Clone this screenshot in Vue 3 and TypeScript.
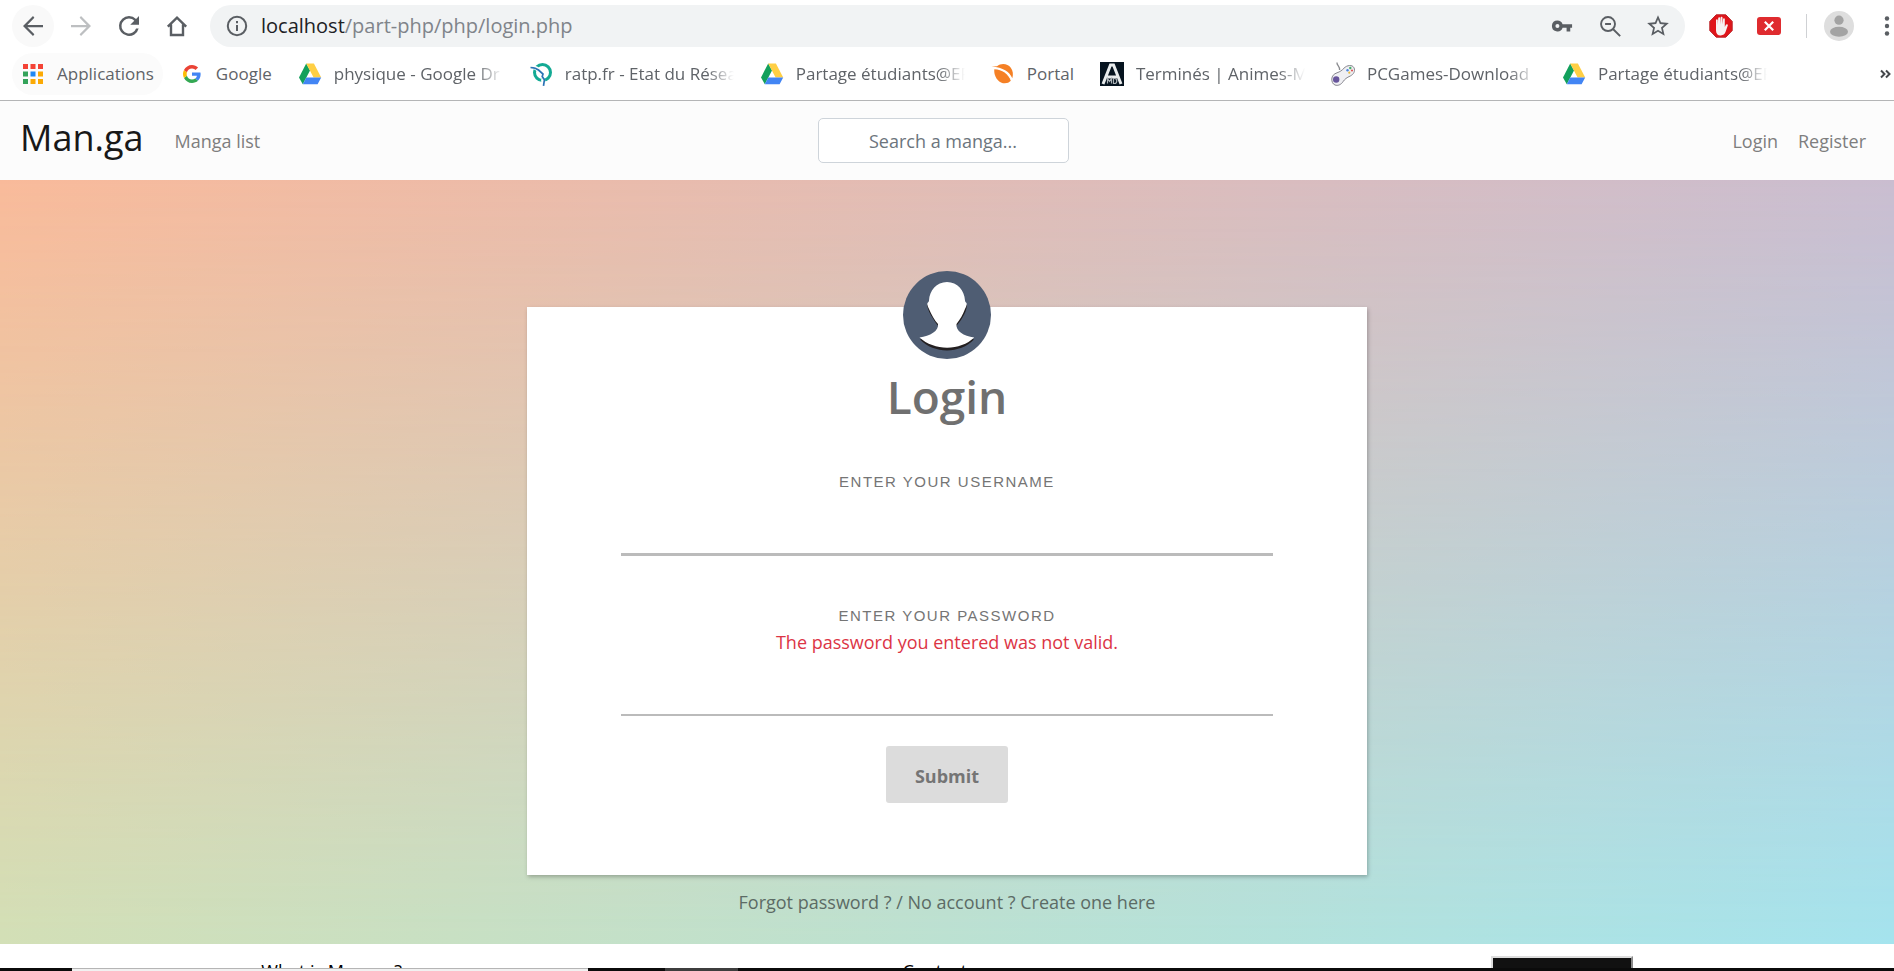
<script setup lang="ts">
import { ref } from 'vue'

type BookmarkIcon = 'google' | 'drive' | 'ratp' | 'portal' | 'anime' | 'gamepad'

interface Bookmark {
  icon: BookmarkIcon
  label: string
  long: boolean
}

const bookmarks: Bookmark[] = [
  { icon: 'google', label: 'Google', long: false },
  { icon: 'drive', label: 'physique - Google Dr', long: true },
  { icon: 'ratp', label: 'ratp.fr - Etat du Résea', long: true },
  { icon: 'drive', label: 'Partage étudiants@EF', long: true },
  { icon: 'portal', label: 'Portal', long: false },
  { icon: 'anime', label: 'Terminés | Animes-Ma', long: true },
  { icon: 'gamepad', label: 'PCGames-Download |', long: true },
  { icon: 'drive', label: 'Partage étudiants@EF', long: true },
]

const appColors: string[] = [
  '#f44336', '#f44336', '#f44336',
  '#34a35a', '#1e88f5', '#fbaa05',
  '#34a35a', '#fbaa05', '#fbaa05',
]

const search = ref('')
const username = ref('')
const password = ref('')
</script>

<template>
  <div class="screen">
    <header class="browser">
      <div class="toolbar">
        <div class="controls">
          <button class="round lit" type="button" aria-label="Back">
            <svg width="30" height="30" viewBox="0 0 24 24" fill="#5a5e63"><path d="M20 11.1H7.5l5.6-5.7L12 4l-8 8 8 8 1.1-1.4-5.6-5.7H20z" /></svg>
          </button>
          <button class="round" type="button" aria-label="Forward">
            <svg width="30" height="30" viewBox="0 0 24 24" fill="#bdbfc1"><path d="M4 11.1h12.5l-5.6-5.7L12 4l8 8-8 8-1.1-1.4 5.6-5.7H4z" /></svg>
          </button>
          <button class="round" type="button" aria-label="Reload">
            <svg width="30" height="30" viewBox="0 0 24 24" fill="#5a5e63"><path d="M17.65 6.35A7.96 7.96 0 0 0 12 4a8 8 0 1 0 7.73 10h-2.08A6 6 0 1 1 12 6c1.66 0 3.14.69 4.22 1.78L13 11h7V4z" /></svg>
          </button>
          <button class="round" type="button" aria-label="Home">
            <svg width="30" height="30" viewBox="0 0 30 30" fill="none" stroke="#5a5e63" stroke-width="2.4"><path d="M5.8 15.6 15 6.6l9.200 9M9 13.500V24h12V13.500" /></svg>
          </button>
        </div>
        <div class="omnibox">
          <svg width="24" height="24" viewBox="0 0 24 24" fill="none" stroke="#5a5e63" stroke-width="2"><circle cx="12" cy="12" r="9.200" /><path d="M12 11v6M12 7v2.200" /></svg>
          <p class="url"><span class="host">localhost</span>/part-php/php/login.php</p>
          <button class="tool" type="button" aria-label="Saved passwords">
            <svg width="22" height="22" viewBox="0 0 24 24" fill="#5a5e63"><path d="M12.650 10A6 6 0 0 0 7 6a6 6 0 1 0 5.650 8H17v4h4v-4h2v-4zM7 14.200a2.200 2.200 0 1 1 0-4.400 2.200 2.200 0 0 1 0 4.400z" /></svg>
          </button>
          <button class="tool" type="button" aria-label="Zoom out">
            <svg width="27" height="27" viewBox="0 0 24 24" fill="none" stroke="#5a5e63" stroke-width="1.700"><circle cx="9.800" cy="9.800" r="6.200" /><path d="m14.200 14.200 6.400 6.400M7.200 9.800h5.200" /></svg>
          </button>
          <button class="tool" type="button" aria-label="Bookmark this page">
            <svg width="26" height="26" viewBox="0 0 24 24" fill="#5a5e63"><path d="M22 9.240l-7.190-.62L12 2 9.190 8.630 2 9.240l5.460 4.730L5.820 21 12 17.270 18.180 21l-1.630-7.030zM12 15.400l-3.760 2.270 1-4.280-3.320-2.880 4.380-.38L12 6.100l1.710 4.040 4.380.38-3.320 2.880 1 4.280z" /></svg>
          </button>
        </div>
        <div class="extensions">
          <button class="plain" type="button" aria-label="Ad blocker">
            <svg width="24" height="24" viewBox="0 0 24 24">
              <path d="M7.200.8h9.600l6.400 6.600v9.200l-6.400 6.600H7.200L.8 16.600V7.400z" fill="#e0151a" stroke="#b9262a" />
              <path d="M7 13.500V6.200c0-1.300 1.700-1.300 1.800 0V11l.4-6.800c.1-1.400 1.900-1.300 1.900 0V10.600l.5-7c.1-1.300 1.900-1.200 1.900.1v6.900l.6-5.600c.1-1.200 1.700-1.100 1.700.1v8l1.100-2.300c.6-1.200 2.300-.5 1.900.7l-2.100 6.100c-.9 2.700-2.500 3.800-5 3.800-3 0-4.700-2-4.700-5z" fill="#f7f3f2" />
            </svg>
          </button>
          <button class="plain" type="button" aria-label="Close extension">
            <svg width="24" height="24" viewBox="0 0 24 24"><rect x="0" y="3" width="24" height="18" rx="3" fill="#df2b2f" /><path d="m7.800 7.800 8.400 8.400M16.200 7.800l-8.400 8.400" stroke="#fff" stroke-width="2.200" /></svg>
          </button>
        </div>
        <div class="account">
          <button class="plain" type="button" aria-label="Profile">
            <svg width="30" height="30" viewBox="0 0 30 30"><circle cx="15" cy="15" r="15" fill="#dedede" /><circle cx="15" cy="9.200" r="4.600" fill="#a3a3a3" /><ellipse cx="15" cy="20.800" rx="9" ry="5" fill="#a3a3a3" /></svg>
          </button>
        </div>
        <button class="plain" type="button" aria-label="Browser menu">
          <svg width="12" height="24" viewBox="0 0 12 24" fill="#5a5e63"><circle cx="6" cy="4.500" r="2.200" /><circle cx="6" cy="12" r="2.200" /><circle cx="6" cy="19.500" r="2.200" /></svg>
        </button>
      </div>

      <nav class="bookmarks" aria-label="Bookmarks">
        <a class="bookmark apps" href="#">
          <svg width="24" height="24" viewBox="0 0 24 24">
            <rect v-for="(color, i) in appColors" :key="i" :x="2 + (i % 3) * 7.500" :y="2 + Math.floor(i / 3) * 7.500" width="5" height="5" :fill="color" />
          </svg>
          <span>Applications</span>
        </a>
        <a v-for="(item, i) in bookmarks" :key="i" class="bookmark" href="#">
          <svg v-if="item.icon === 'google'" width="24" height="24" viewBox="-4 -4 32 32">
            <path fill="#4285f4" d="M23.500 12.300c0-.9-.1-1.500-.3-2.200H12v4.200h6.500c-.1 1.100-.8 2.700-2.400 3.800l3.700 2.900c2.300-2.100 3.700-5.100 3.700-8.700z" />
            <path fill="#34a853" d="M12 24c3.200 0 6-1.100 7.900-2.900L16.100 18c-1 .7-2.400 1.200-4.100 1.200-3.200 0-5.900-2.100-6.800-5L1.300 17.300C3.200 21.200 7.300 24 12 24z" />
            <path fill="#fbbc05" d="M5.200 14.200a7.400 7.400 0 0 1 0-4.500L1.300 6.600a12 12 0 0 0 0 10.700z" />
            <path fill="#ea4335" d="M12 4.700c2.300 0 3.800 1 4.700 1.800l3.400-3.300C18 1.200 15.200 0 12 0 7.300 0 3.200 2.700 1.300 6.600l3.900 3.100c1-2.900 3.600-5 6.800-5z" />
          </svg>
          <svg v-else-if="item.icon === 'drive'" width="24" height="24" viewBox="0 0 24 24">
            <path fill="#12a05c" d="M8.200 1.500 12 8.500 4.800 22.300 1 15.500z" />
            <path fill="#ffcf44" d="M8.200 1.500h7.700l7.300 14h-7.600z" />
            <path fill="#4285f4" d="M8.300 15.500h14.900l-3.600 6.800H4.800z" />
          </svg>
          <svg v-else-if="item.icon === 'ratp'" width="24" height="24" viewBox="0 0 24 24" fill="none">
            <circle cx="13.500" cy="10.500" r="8" stroke="#13aa94" stroke-width="3" />
            <path d="M1.500 5c4 0 6 .8 8 3" stroke="#fff" stroke-width="4" />
            <path d="M14 17l.8 7" stroke="#fff" stroke-width="4" />
            <path d="M1.500 5.500c3 .2 6 .8 8 2.500l4.500 4-.8 2.500 2.200 3.300-.9 6" stroke="#2a73b5" stroke-width="1.700" />
          </svg>
          <svg v-else-if="item.icon === 'portal'" width="24" height="24" viewBox="0 0 24 24">
            <path fill="#f58025" d="M6 4.200C10 1 16.500 1.200 19.800 5.800c2.300 3.300 2.600 6.700 1.500 10.400C18 9.500 12.500 5.700.5 4.600z" />
            <path fill="#f58025" d="M3.300 7.200c8 .5 14 4.600 16.500 11.600-2.400 2.600-6.400 3.300-9.800 1.600-5-2.500-7.200-8-6.700-13.200z" />
          </svg>
          <svg v-else-if="item.icon === 'anime'" width="24" height="24" viewBox="0 0 24 24">
            <rect width="24" height="24" fill="#06131f" />
            <path d="M3 22 10.500 3h3L21 22M7 15h10" fill="none" stroke="#e9eced" stroke-width="3" />
            <path d="M7.500 21.500v-5l2 3 2-3v5M13.500 16.500v5h1c3 0 3-5 0-5z" fill="none" stroke="#aab1b5" stroke-width="1.200" />
          </svg>
          <svg v-else width="24" height="24" viewBox="0 0 24 24">
            <path d="M6 .5c-.5 3 3 3.500 2.600 7.500" fill="none" stroke="#88898d" stroke-width="1.300" />
            <path d="M.8 17c0-3 2.200-5.200 5.200-6.200 3-1 5-2.500 7-4.600C16 3 21.300 2.400 23 5.800c1.600 3.400-.6 6.700-3.700 8.200-3.500 1.600-5.500 3-7.300 5.700-2 3.100-5.200 4.300-8 3.300C1.500 22 .8 19.500.8 17z" fill="#efeff3" stroke="#85858d" />
            <circle cx="5.200" cy="17.500" r="3.200" fill="#67559c" />
            <circle cx="16.500" cy="8.300" r="1.200" fill="#4a86e0" /><circle cx="19.300" cy="6" r="1.200" fill="#49ad68" />
            <circle cx="18.300" cy="10.700" r="1.100" fill="#e7b93d" /><circle cx="21" cy="8.500" r="1.100" fill="#df5555" />
          </svg>
          <span :class="{ fade: item.long }">{{ item.label }}</span>
        </a>
        <button class="plain more" type="button" aria-label="More bookmarks">
          <svg width="12" height="16" viewBox="0 0 12 16" fill="none" stroke="#44474b" stroke-width="2"><path d="m1 4.500 3.500 3.500L1 11.500M6 4.500 9.500 8 6 11.500" /></svg>
        </button>
      </nav>
    </header>

    <main class="page">
      <nav class="navbar" aria-label="Main">
        <div class="links">
          <a class="brand" href="#">Man.ga</a>
          <a href="#">Manga list</a>
        </div>
        <input v-model="search" class="search" type="text" placeholder="Search a manga..." aria-label="Search a manga">
        <div class="links end">
          <a href="#">Login</a>
          <a href="#">Register</a>
        </div>
      </nav>

      <section class="hero">
        <form class="card" @submit.prevent>
          <svg class="avatar" width="88" height="88" viewBox="0 0 88 88" aria-hidden="true">
            <circle cx="44" cy="44" r="44" fill="#4f5d73" />
            <path fill="#231f20" d="M24 34c1 5 3 9 6 13.500 2 3.500 4 6 5.200 7.500h18c1.500-1.500 4-4.500 6-8C62 42.500 63.500 39 64 34zM17 68.500C31 83 57 83 71 68.500c-10-4-44-4-54 0z" />
            <path fill="#fff" d="M44 11c10.500 0 17.500 8.500 18 18.500.2 1.500.8 1.800 1.500 2.500.5.600 0 3.500-1.500 6-2 5.500-5 10.500-8.500 15-1 7 7 12 17.700 13.500C57.500 80 31 80 16.500 66.500 27 65 36 60 35 53c-3.500-3.500-6.500-9.500-9-15-1.500-2.500-2-5.400-1.500-6 .7-.7 1.300-1 1.500-2.500C26.500 19.500 33.500 11 44 11z" />
          </svg>
          <h1>Login</h1>
          <div class="field">
            <label for="username">ENTER YOUR USERNAME</label>
            <input id="username" v-model="username" class="thick" type="text" autocomplete="username">
          </div>
          <div class="field">
            <label for="password">ENTER YOUR PASSWORD</label>
            <p id="password-error" class="error">The password you entered was not valid.</p>
            <input id="password" v-model="password" type="password" autocomplete="current-password" aria-describedby="password-error">
          </div>
          <button class="submit" type="submit">Submit</button>
        </form>
        <p class="help"><a href="#">Forgot password ?</a> / <a href="#">No account ? Create one here</a></p>
      </section>

      <footer class="footer">
        <p>What is Man.ga ?</p>
        <p>Contact us</p>
        <div><button class="top" type="button" aria-label="Back to top"></button></div>
      </footer>
    </main>

    <div class="taskbar"><i class="finder"></i><i class="running"></i></div>
  </div>
</template>

<style>
body {
  margin: 0;
}
</style>

<style scoped>
* {
  box-sizing: border-box;
}

.screen {
  display: flex;
  flex-direction: column;
  height: 100vh;
  overflow: hidden;
  background: #fff;
  color: #212529;
  font: 18px/28px "Open Sans", "Noto Sans", sans-serif;
}

p,
h1 {
  margin: 0;
}

a {
  color: inherit;
  text-decoration: none;
}

svg {
  display: block;
  flex: none;
}

button,
input {
  font: inherit;
}

.browser {
  flex: none;
  border-bottom: 1px solid #b4b5b6;
}

.toolbar {
  display: flex;
  align-items: center;
  height: 52px;
  padding: 0 1px 0 12px;
}

.controls {
  display: flex;
  gap: 6px;
  margin-right: 12px;
}

.round,
.tool,
.plain {
  display: flex;
  align-items: center;
  justify-content: center;
  padding: 0;
  border: 0;
  background: none;
}

.round {
  width: 42px;
  height: 42px;
  border-radius: 50%;
}

.lit {
  background: #f9f9f9;
}

.omnibox {
  display: flex;
  flex: 1;
  align-items: center;
  height: 42px;
  padding: 0 12px 0 15px;
  gap: 18px;
  border-radius: 21px;
  background: #f1f3f4;
}

.url {
  flex: 1;
  margin-left: -6px;
  color: #80848a;
  font-size: 20px;
  line-height: 30px;
}

.host {
  color: #202124;
}

.tool {
  width: 30px;
  height: 30px;
}

.extensions {
  display: flex;
  gap: 24px;
  padding: 0 25px 0 24px;
}

.account {
  padding: 0 27px 0 18px;
  background: linear-gradient(#cfd1d4, #cfd1d4) left / 1px 24px no-repeat;
}

.bookmarks {
  display: flex;
  align-items: center;
  gap: 26px;
  padding: 1px 2px 5px 12px;
  color: #5f6368;
  font-size: 17px;
  white-space: nowrap;
}

.bookmark {
  display: flex;
  flex: none;
  align-items: center;
  gap: 12px;
  height: 42px;
}

.apps {
  margin-right: -9px;
  padding: 0 9px;
  border-radius: 21px;
  background: #fbfbfb;
}

.fade {
  width: 169px;
  overflow: hidden;
  -webkit-mask-image: linear-gradient(90deg, #000 84%, transparent);
  mask-image: linear-gradient(90deg, #000 84%, transparent);
}

.more {
  margin-left: auto;
}

.page {
  flex: 1;
  min-height: 0;
  overflow: hidden;
}

.navbar {
  display: grid;
  grid-template-columns: 1fr 251px 1fr;
  align-items: center;
  height: 79px;
  padding: 0 28px 0 20px;
  background: #fcfcfc;
  color: #7e7e7e;
}

.links {
  display: flex;
  align-items: center;
  gap: 20px;
}

.links .brand {
  margin-right: 11px;
  padding-bottom: 5px;
  color: #181818;
  font-size: 36px;
  line-height: 40px;
}

.end {
  justify-content: flex-end;
}

.search {
  height: 45px;
  padding: 0 12px;
  border: 1px solid #ced4da;
  border-radius: 5px;
  background: #fff;
  text-align: center;
}

.search::placeholder {
  color: #6c757d;
  opacity: 1;
}

.hero {
  position: relative;
  isolation: isolate;
  padding: 127px 24px 28px;
  background: linear-gradient(90deg, #d3e0b7, #a5e4ee);
}

.hero::before {
  content: "";
  position: absolute;
  inset: 0;
  z-index: -1;
  background: linear-gradient(90deg, #f9ba9a, #cabdd0);
  -webkit-mask-image: linear-gradient(#000, transparent);
  mask-image: linear-gradient(#000, transparent);
}

.card {
  position: relative;
  display: flex;
  flex-direction: column;
  align-items: center;
  gap: 48px;
  max-width: 840px;
  margin: 0 auto;
  padding: 61px 94px 72px;
  background: #fff;
  box-shadow: 1px 2px 4px rgba(0, 0, 0, 0.25);
}

.avatar {
  position: absolute;
  top: -36px;
  left: calc(50% - 44px);
}

.card h1 {
  margin-bottom: -2px;
  color: #707070;
  font-size: 46px;
  font-weight: 600;
  line-height: 56px;
}

.field {
  display: flex;
  flex-direction: column;
  align-self: stretch;
  text-align: center;
}

.field label {
  color: #757575;
  font: 15px/24px "Liberation Sans", Arial, sans-serif;
  letter-spacing: 0.1em;
}

.error {
  color: #dc3545;
}

.field input {
  height: 60px;
  padding: 0;
  border: 0;
  border-bottom: 2px solid #bbb;
  outline: 0;
  background: none;
  text-align: center;
}

.field .thick {
  height: 62px;
  border-bottom-width: 3px;
}

.submit {
  height: 57px;
  margin-top: -18px;
  padding: 2px 29px 0;
  border: 0;
  border-radius: 3px;
  background: #dcdcdc;
  color: #757575;
  font-weight: 700;
}

.help {
  margin-top: 13px;
  color: #5c6b65;
  text-align: center;
}

.footer {
  display: grid;
  grid-template-columns: repeat(3, 1fr);
  padding: 12px 24px;
  background: #fff;
  color: #000;
  line-height: 30px;
  text-align: center;
}

.top {
  width: 142px;
  height: 48px;
  border: 2px outset #ddd;
  background: #111;
}

.taskbar {
  display: flex;
  flex: none;
  gap: 77px;
  height: 3px;
  padding-left: 72px;
  background: #0b0b0b;
}

.finder {
  width: 516px;
  border-top: 1px solid #b5b5b5;
  background: #f1f1f1;
}

.running {
  width: 73px;
  background: #3e3e3e;
}
</style>
